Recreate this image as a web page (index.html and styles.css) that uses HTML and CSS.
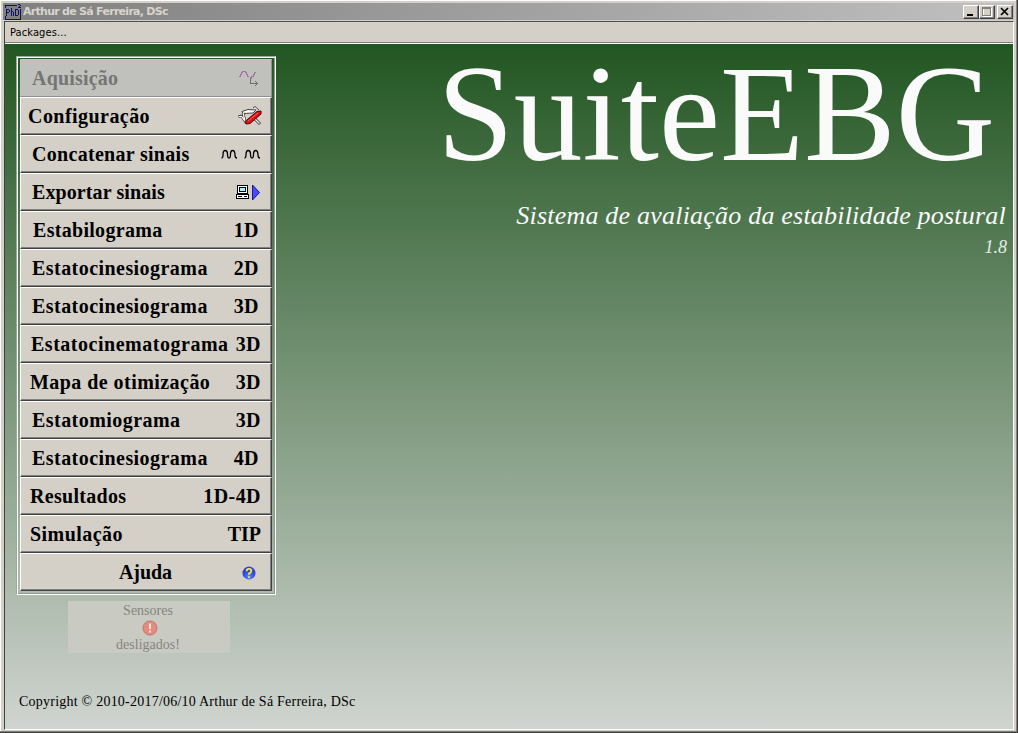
FILE: index.html
```
<!DOCTYPE html>
<html lang="pt">
<head>
<meta charset="utf-8">
<title>Arthur de Sá Ferreira, DSc</title>
<link rel="stylesheet" href="styles.css">
</head>
<body>
<div class="window">
  <header class="titlebar">
    <svg class="app-icon" width="17" height="16" viewBox="0 0 17 16" shape-rendering="crispEdges" fill="none" stroke="#10106c">
      <path d="M0 1.5H12M0.5 1V4M0 15.5H16M0.5 12V15M15.5 5V15M1.5 5V12M1 5.5H4M4.5 6V8M2 8.5H4M6.5 4V12M7 7.5H8M8.5 8V12M10.5 5V12M10 5.5H13M13.5 6V11M10 11.5H13M13 0.5H15M15.5 1V2M14.5 2V3M13 3.5H16"/>
    </svg>
    <span class="title">Arthur de Sá Ferreira, DSc</span>
    <div class="controls">
      <span class="ctl"><svg width="14" height="12" shape-rendering="crispEdges"><path d="M3 8h6v2H3z"/></svg></span>
      <span class="ctl"><svg width="14" height="12" shape-rendering="crispEdges"><path d="M3.500 2.500h8v8h-8z" fill="none" stroke="#fff"/><path d="M2 1.500h9M2.500 1v9M2 9.500h9M10.500 1v9M2 2.500h8" fill="none" stroke="#848078"/></svg></span>
      <span class="ctl close"><svg width="14" height="12"><path d="M3 2l7 7M10 2l-7 7" stroke="#000" stroke-width="1.700"/></svg></span>
    </div>
  </header>
  <div class="frame">
    <nav class="menubar">Packages...</nav>
    <main class="content">
      <aside class="side">
        <div class="panel">
          <div class="row disabled p12"><span class="snug">Aquisição</span>
            <svg class="ic r11" width="22" height="18" shape-rendering="crispEdges" fill="none"><path d="M1 7.500h1v-2h1v-2h1v-1h3v1h1v2h1v2h2M13 7h2v-2h1v-2h2" stroke="#a274a2"/><path d="M12 8h2v2h-2z" fill="#a274a2"/><path d="M12.500 10v4.500H20M17 12l2.500 2.500L17 17" stroke="#707070"/></svg></div>
          <div class="row p8"><span>Configuração</span>
            <svg class="ic r8" width="26" height="22"><path d="M5 6.500l6-2 8 .5-3 3-10 .5z" fill="#fff" stroke="#444"/><path d="M16 3l2-1.500 4 3.500" fill="#eee" stroke="#444"/><path d="M1.500 11.500l3-.5 5 7M6 8l2 8" fill="none" stroke="#333" stroke-width="2.600"/><path d="M2 11.500l2.500-.2 5 6.500M6 8l2 8" fill="none" stroke="#fff" stroke-width="1.200"/><path d="M17 13l6 6" stroke="#333" stroke-width="2.800"/><path d="M17 13l5.500 5.500" stroke="#eee" stroke-width="1.300"/><path d="M8 16.500L20 6.500l4-.5v3L13 18.500l-4 .5z" fill="#d9151b" stroke="#500"/><path d="M11 16L21 8" stroke="#ff6055"/></svg></div>
          <div class="row p12"><span class="mid">Concatenar sinais</span>
            <svg class="ic r10" width="40" height="10" fill="none" stroke="#000" stroke-width="1.300"><path id="wave" d="M.5 9q1.500 0 1.500-3 0-4.500 2.200-4.500T6.500 5q0 4 1.500 4t1.500-4q0-3.500 2.200-3.500T14 6q0 3 2 3"/><use href="#wave" x="23"/></svg></div>
          <div class="row p12"><span class="tight">Exportar sinais</span>
            <svg class="ic r11" width="24" height="17" shape-rendering="crispEdges"><path d="M1.500 1.500h10v8h-10zM.5 10.500h12v4h-12z" fill="#fff" stroke="#000"/><path d="M3.500 3.500h6v4h-6z" fill="#9ff4f4" stroke="#000"/><path d="M2 12.500h4M8 12.500h3" stroke="#000"/><path shape-rendering="auto" d="M16.500 1v15l7-7.500z" fill="#4a4af8" stroke="#1414a8"/></svg></div>
          <div class="row p13"><span class="mid">Estabilograma</span><b class="r12">1D</b></div>
          <div class="row p12"><span>Estatocinesiograma</span><b class="r12">2D</b></div>
          <div class="row p12"><span>Estatocinesiograma</span><b class="r12">3D</b></div>
          <div class="row p11"><span class="wide">Estatocinematograma</span><b class="r10">3D</b></div>
          <div class="row p10"><span>Mapa de otimização</span><b class="r10">3D</b></div>
          <div class="row p12"><span>Estatomiograma</span><b class="r10">3D</b></div>
          <div class="row p12"><span>Estatocinesiograma</span><b class="r12">4D</b></div>
          <div class="row p10"><span class="mid">Resultados</span><b class="r10">1D-4D</b></div>
          <div class="row p10"><span>Simulação</span><b class="r10 tip">TIP</b></div>
          <div class="row p99"><span class="flat">Ajuda</span>
            <svg class="ic r15 help" width="14" height="14" viewBox="0 0 15 15"><defs><radialGradient id="hb" cy=".8"><stop offset="0" stop-color="#5b8af5"/><stop offset="1" stop-color="#2d45d4"/></radialGradient></defs><circle cx="7.500" cy="7.500" r="7" fill="url(#hb)"/><path d="M5 5.500q0-2.500 2.500-2.500t2.500 2-2.500 3v1.500M7.500 11v1.800" fill="none" stroke="#f4ee3c" stroke-width="1.900"/></svg></div>
        </div>
        <div class="sensors">
          <span>Sensores</span>
          <svg width="16" height="16"><circle cx="8" cy="8" r="7" fill="#e88a80" stroke="#b87870"/><path d="M8 3.500v5.500M8 10.500v2" stroke="#f4e8e2" stroke-width="2"/></svg>
          <span class="off">desligados!</span>
        </div>
        <div class="copyright">Copyright © 2010-2017/06/10 Arthur de Sá Ferreira, DSc</div>
      </aside>
      <section class="brand">
        <h1>SuiteEBG</h1>
        <p class="tagline">Sistema de avaliação da estabilidade postural</p>
        <p class="version">1.8</p>
      </section>
    </main>
  </div>
</div>
</body>
</html>
```
FILE: styles.css
```
* { box-sizing: border-box; }
body { margin: 0; }
.window {
  width: 1018px; height: 733px; background: #d4d0c8;
  border-style: solid; border-width: 0 1px 1px 0; border-color: #404040;
  box-shadow: inset -1px -1px #808080, inset 1px 1px #fff;
  padding: 3px 3px 2px 3px;
  display: flex; flex-direction: column;
  font-family: "Liberation Serif", serif;
}
.titlebar {
  height: 17px; flex: none; display: flex; align-items: center;
  background: linear-gradient(90deg, #808080, #c0c0c0);
  padding: 0 1px 0 2px;
}
.app-icon { flex: none; }
.title {
  font: bold 11px/17px "DejaVu Sans", sans-serif; letter-spacing: -0.72px;
  color: #d8d4cc; margin-left: 1px; white-space: nowrap;
}
.controls { margin-left: auto; display: flex; }
.ctl {
  width: 16px; height: 14px; background: #d4d0c8; border: 1px solid;
  border-color: #fff #404040 #404040 #fff; box-shadow: inset -1px -1px #808080;
  display: flex;
}
.ctl.close { margin-left: 2px; }
.frame {
  flex: 1; margin: 1px 0 0 1px; border: 1px solid; border-color: #505050 #fff #fff #404040;
  display: flex; flex-direction: column; min-height: 0;
}
.menubar {
  height: 22px; flex: none; background: #d4d0c8; padding: 1px 0 0 5px;
  font: 11px/20px "DejaVu Sans Condensed", "DejaVu Sans", sans-serif; letter-spacing: 0.1px; color: #000;
  border-bottom: 1px solid #fff; box-shadow: inset 0 -1px #808080;
}
.content {
  flex: 1; min-height: 0; display: flex;
  background: linear-gradient(#225622, #d0d4d0);
}
.side { width: 390px; padding: 12px 0 0 11px; }
.panel {
  width: 260px; height: 539px; padding: 2px 3px 3px 3px;
  border: 1px solid; border-color: #9aa89a #fff #fff #9aa89a;
  box-shadow: inset 1px 1px #fff, inset -1px -1px #909890;
}
.row {
  height: 38px; background: #d4d0c8; display: flex; align-items: center;
  border: 1px solid; border-color: #fff #404040 #404040 #fff;
  box-shadow: inset -1px -1px #808080;
  font-weight: bold; font-size: 20px; line-height: 36px; letter-spacing: 0.45px; color: #000;
  white-space: nowrap;
}
.wide { letter-spacing: 0.52px; }
.mid { letter-spacing: 0.3px; }
.snug { letter-spacing: 0.2px; }
.tight { letter-spacing: 0.1px; }
.flat { letter-spacing: -0.1px; }
.row .tip { letter-spacing: 0; }
.row b, .ic { margin-left: auto; }
.row.disabled { background: #c0c0bc; color: #757575; border-color: #b8ccb8 #909090 #909090 #b8ccb8; box-shadow: none; }
.p8 { padding-left: 7px; } .p10 { padding-left: 9px; } .p11 { padding-left: 10px; }
.p12 { padding-left: 11px; } .p13 { padding-left: 12px; } .p99 { padding-left: 98px; }
.r8 { margin-right: 8px; } .r10 { margin-right: 10px; } .r11 { margin-right: 11px; }
.r12 { margin-right: 12px; } .r15 { margin-right: 15px; }
.help { margin-top: 2px; }
.sensors {
  width: 162px; height: 52px; margin: 6px 0 0 52px; padding-top: 1px; background: #c9cac2;
  display: flex; flex-direction: column; align-items: center;
  font-size: 14px; line-height: 18px; color: #858580;
}
.sensors svg { flex: none; margin-right: -1px; }
.sensors span { margin-right: 2px; }
.copyright { margin: 40px 0 0 3px; font-size: 14px; line-height: 18px; letter-spacing: 0.23px; white-space: nowrap; }
.brand { flex: 1; display: flex; flex-direction: column; align-items: flex-end; color: #fafafa; }
.brand h1 { margin: -10px 18px 0 0; font-size: 137.500px; line-height: 160px; font-weight: normal; }
.tagline { margin: 7px 7px 0 0; font: italic 26px/30px "Liberation Serif", serif; letter-spacing: 0.21px; white-space: nowrap; }
.version { margin: 6px 6px 0 0; font: italic 18px/20px "Liberation Serif", serif; color: #e6ece6; }
```
